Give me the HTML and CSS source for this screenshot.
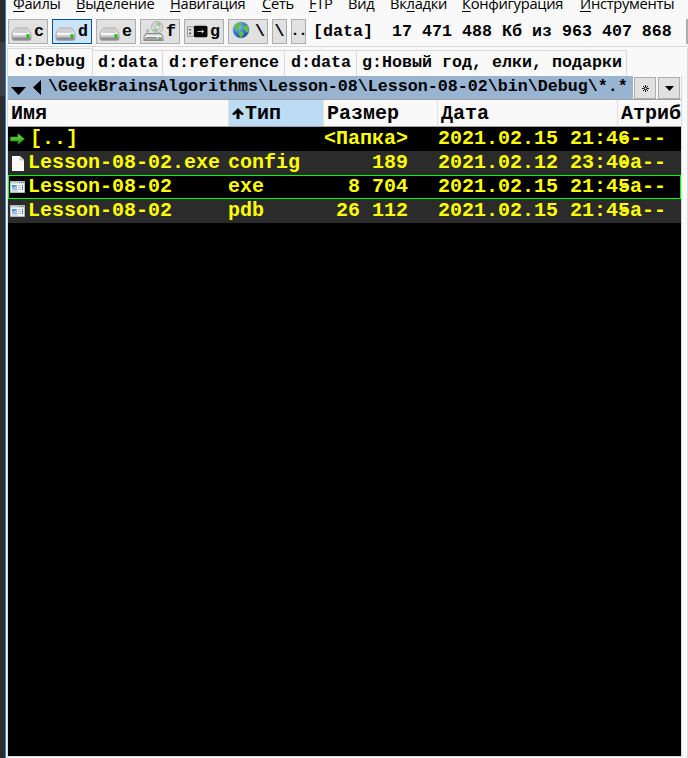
FILE: index.html
```
<!DOCTYPE html>
<html lang="ru">
<head>
<meta charset="utf-8">
<title>Файлы</title>
<link rel="stylesheet" href="styles.css">
</head>
<body>
<svg class="defs" width="0" height="0">
  <defs>
    <linearGradient id="metal" x1="0" y1="0" x2="0" y2="1"><stop offset="0" stop-color="#d8d8d8"/><stop offset=".45" stop-color="#f4f4f4"/><stop offset="1" stop-color="#858585"/></linearGradient>
    <radialGradient id="ocean" cx=".35" cy=".3" r=".75"><stop offset="0" stop-color="#8bc8f4"/><stop offset=".6" stop-color="#2e78c8"/><stop offset="1" stop-color="#123f94"/></radialGradient>
    <linearGradient id="leaf" x1="0" y1="0" x2="0" y2="1"><stop offset="0" stop-color="#8be85a"/><stop offset="1" stop-color="#118a0c"/></linearGradient>
    <symbol id="drive" viewBox="0 0 20 14">
      <path d="M5 1h10q1.500 0 2.200 1.500L19.500 7v4.500q0 1.800-1.800 1.800H2.300Q.5 13.300.5 11.500V7l2.300-4.500Q3.500 1 5 1z" fill="url(#metal)" stroke="#969696" stroke-width=".8"/>
      <path d="M5 1.500h10L17.500 6h-15z" fill="#cfcfcf"/><path d="M2 7h16" stroke="#fff"/><path d="M2 11.500h16" stroke="#8b8791" stroke-width="1.500"/>
      <path d="M15 7h3v4h-3z" fill="#35b72b"/>
    </symbol>
    <symbol id="app" viewBox="0 0 15 12">
      <path d="M.5.5h14v11H.5z" fill="#f5f5f5" stroke="#b9b9b9"/><path d="M1 1h13v1.500H1z" fill="#c4ccd5"/>
      <path d="M9 1h1v1H9zM11 1h1v1h-1zM13 1h1v1h-1z" fill="#56779b"/>
      <path d="M2 4h5v4.500H2z" fill="#448bd0"/><path d="M2 6.500l5-2v4H2z" fill="#8cc5ed"/>
      <path d="M8 4.500h3M8 6.500h3M8 8.500h3M2 10h6" stroke="#aab2ba" stroke-width=".8"/><path d="M12 4h1v5h-1z" fill="#4c8bc5"/>
    </symbol>
  </defs>
</svg>
<div class="window">
  <nav class="menu">
    <span class="m1"><u>Ф</u>айлы</span><span class="m2"><u>В</u>ыделение</span><span class="m3"><u>Н</u>авигация</span><span class="m4"><u>С</u>еть</span><span class="m5"><u>F</u>TP</span><span class="m6">Ви<u>д</u></span><span class="m7">Вк<u>л</u>адки</span><span class="m8"><u>К</u>онфигурация</span><span class="m9"><u>И</u>нструменты</span>
  </nav>
  <div class="toolbar">
    <button class="drive"><svg class="disk"><use href="#drive"/></svg>c</button>
    <button class="drive active"><svg class="disk"><use href="#drive"/></svg>d</button>
    <button class="drive"><svg class="disk"><use href="#drive"/></svg>e</button>
    <button class="drive"><svg class="optical" viewBox="0 0 20 20"><path d="M3 12h14l2 3v3.500H1V15z" fill="url(#metal)" stroke="#8b8b8b"/><path d="M3 16h10" stroke="#666"/><path d="M15 15.500h2.500v2H15z" fill="#35b72b"/><path d="M3 8h3v3H3z" fill="#b5b5b5"/><circle cx="13.500" cy="6" r="5.500" fill="#d2d4d2" stroke="#a4a4a4" stroke-width=".7"/><path d="M13.500 6V.7l4 2zM13.500 6v5l-4-2z" fill="#8ccb80"/><circle cx="13.500" cy="6" r="1.700" fill="#fff" stroke="#999" stroke-width=".6"/></svg>f</button>
    <button class="drive"><svg class="usb" viewBox="0 0 20 12"><path d="M.5 1.500h7v9h-7z" fill="#e5e5e5" stroke="#999"/><path d="M2 3.500h2v1.500H2zM2 7h2v1.500H2z" fill="#555"/><rect x="6.500" y=".5" width="13" height="11" rx="1.500" fill="#080808"/><path d="M10 6h6M14 4.500L15.800 6 14 7.500" fill="none" stroke="#ddd" stroke-width=".9"/></svg>g</button>
    <button class="drive"><svg class="globe" viewBox="0 0 18 18"><circle cx="9" cy="9" r="8" fill="url(#ocean)" stroke="#7c9cbd" stroke-width=".6"/><path d="M2 6q2-4 6-4.500l2 1-1 2-2 1 1 2-2 1-1 2zM12 4l4 1 .500 5-2 2-2-3-2-1zM7 10l4 1 1 2-3 4-2-3z" fill="#62bd49"/></svg>\</button>
    <button class="root">\</button><button class="up">..</button>
    <span class="volume">[data]</span><span class="space">17 471 488 Кб из 963 407 868</span><i class="next"></i>
  </div>
  <div class="workspace">
  <div class="panel">
    <div class="tabs"><span class="tab current">d:Debug</span><span class="tab t2">d:data</span><span class="tab t3">d:reference</span><span class="tab t4">d:data</span><span class="tab t5">g:Новый год, елки, подарки</span></div>
    <div class="path">
      <div class="address"><svg width="40" height="24"><path d="M3 11h15l-7.500 8zM33 4v15l-8-7.500z"/></svg><span>\GeekBrainsAlgorithms\Lesson-08\Lesson-08-02\bin\Debug\*.*</span></div>
      <button><svg width="7" height="7"><path d="M3.500 0v7M0 3.500h7M1 1l5 5M6 1L1 6" stroke="#000" stroke-width=".9"/><circle cx="3.500" cy="3.500" r="1" fill="#e1e1e1"/></svg></button><button><svg width="9" height="5"><path d="M0 0h9L4.500 5z"/></svg></button>
    </div>
    <div class="grid head"><span>Имя</span><span class="sorted"><svg width="12" height="12" viewBox="0 0 12 12"><path d="M6 0l6 6-2 1.200-2.500-2V11h-3V5.200L2 7.200 0 6z"/></svg>Тип</span><span>Размер</span><span>Дата</span><span>Атриб</span></div>
    <div class="list">
    <div class="grid row"><span class="name"><svg width="15" height="12" viewBox="0 0 15 12"><path d="M.5 4H8V.7L14.500 6 8 11.300V8H.5z" fill="url(#leaf)" stroke="#289b18" stroke-width=".6"/></svg><b class="parent">[..]</b></span><span></span><span class="size">&lt;Папка&gt;</span><span class="date">2021.02.15 21:46</span><span class="attr">----</span></div>
    <div class="grid row odd"><span class="name"><svg width="15" height="15" viewBox="0 0 15 15"><path d="M2 0h8l4 4v11H2z" fill="#f8f8f8"/><path d="M10 0v4h4z" fill="#ddd" stroke="#aaa" stroke-width=".6"/></svg><b>Lesson-08-02.exe</b></span><span>config</span><span class="size">189</span><span class="date">2021.02.12 23:40</span><span class="attr">-a--</span></div>
    <div class="grid row focused"><span class="name"><svg width="15" height="12"><use href="#app"/></svg><b>Lesson-08-02</b></span><span>exe</span><span class="size">8 704</span><span class="date">2021.02.15 21:45</span><span class="attr">-a--</span></div>
    <div class="grid row odd"><span class="name"><svg width="15" height="12"><use href="#app"/></svg><b>Lesson-08-02</b></span><span>pdb</span><span class="size">26 112</span><span class="date">2021.02.15 21:45</span><span class="attr">-a--</span></div>
    </div>
  </div>
  <div class="splitter"></div>
  </div>
</div>
</body>
</html>
```
FILE: styles.css
```
* { box-sizing: border-box; }
body { margin: 0; height: 758px; overflow: hidden; background: linear-gradient(#2d2d30 42px, #3f3f46 42px 96px, #2d2d30 96px); font: bold 16.67px/20px "Liberation Mono", monospace; color: #000; }
.defs { display: block; height: 0; }
svg { flex: none; }
button { font: inherit; color: inherit; padding: 0; margin: 0; border: 1px solid #adadad; background: #e1e1e1; display: flex; align-items: center; border-radius: 0; }
.window { height: 758px; margin-left: 5px; border-left: 1px solid #2b83cf; background: #f9f9f9; overflow: hidden; display: flex; flex-direction: column; }
.menu { height: 14px; flex: none; display: flex; padding-left: 7px; gap: 16px; font: 14.7px/20px "Open Sans", sans-serif; letter-spacing: -.28px; white-space: nowrap; }
.menu span { margin-top: -7px; height: 20px; flex: none; }
.menu u { text-underline-offset: 2px; text-decoration-thickness: 1px; }
.m1 { width: 47px; }
.m2 { width: 78px; }
.m3 { width: 76px; }
.m4 { width: 31px; }
.m5 { width: 23px; }
.m6 { width: 26px; }
.m7 { width: 56px; }
.m8 { width: 102px; }
.m9 { width: 94px; }

.toolbar { height: 33px; flex: none; display: flex; align-items: flex-start; padding: 5px 0 0 2px; border-bottom: 1px solid #d9d9d9; white-space: nowrap; }
.toolbar button { height: 25px; flex: none; }
.toolbar .drive { width: 40px; margin-right: 4px; padding-left: 2px; gap: 2px; }
.toolbar .active { border-color: #00549a; background: #cce4f7; }
.disk { width: 21px; height: 14px; margin-top: 5px; }
.optical { width: 21px; height: 21px; }
.usb { width: 21px; height: 13px; }
.globe { width: 18px; height: 18px; margin: 0 3px 3px 1px; }
.toolbar .root { width: 15px; justify-content: center; margin-right: 4px; }
.toolbar .up { width: 15px; overflow: hidden; letter-spacing: -1px; justify-content: center; font-size: 15px; }
.volume { margin: 3px 0 0 7px; }
.space { margin: 3px 0 0 19px; }
.next { width: 3px; height: 25px; margin-left: 14px; border: 1px solid #adadad; background: #e1e1e1; }

.workspace { flex: 1; display: flex; min-height: 0; justify-content: space-between; }
.panel { width: 675px; margin: 0 0 1px 1px; border: solid #d9d9d9; border-width: 0 1px 1px; display: flex; flex-direction: column; background: #f9f9f9; }
.splitter { width: 1px; background: #d9d9d9; margin-top: 1px; }
.tabs { display: flex; align-items: flex-end; height: 29px; flex: none; white-space: nowrap; background: #f9f9f9; margin: 0 -1px; }
.tab { height: 26px; border: 1px solid #d9d9d9; border-left: 0; border-bottom: 0; padding: 2px 0 0 5px; }
.tab.current { width: 86px; height: 28px; border-left: 1px solid #d9d9d9; padding: 3px 0 0 7px; }
.t2 { width: 70px; }
.t3 { width: 122px; padding-left: 6px; }
.t4 { width: 72px; padding-left: 6px; }
.t5 { width: 270px; }
.path { height: 24px; display: flex; flex: none; background: #f9f9f9; border-bottom: 1px solid #a0a0a0; }
.address { width: 625px; background: #99b4d1; display: flex; white-space: nowrap; }
.address span { padding-top: 1px; }
.path button { width: 22px; height: 22px; margin: 1px 1px 0; justify-content: center; }

.grid { display: grid; grid-template-columns: 220px 96px 114px 180px 63px; width: 673px; font-size: 20px; line-height: 24px; white-space: nowrap; }
.head { grid-template-columns: 221px 95px 114px 180px 63px; height: 27px; background: #f9f9f9; border-bottom: 1px solid #a0a0a0; flex: none; }
.head span { border-right: 1px solid #e1e1e1; padding: 2px 0 0 3px; }
.head span:last-child { border-right: 0; }
.head .sorted { background: #bcdcf4; display: flex; }
.sorted svg { margin: 6px 1px 0 0; }
.list { flex: 1; background: #000; color: #ff0; }
.row { height: 24px; }
.row.odd { background: #2b2b2b; }
.row.focused { outline: 1px solid #0f0; outline-offset: -1px; }
.name { display: flex; align-items: center; padding-left: 2px; }
.name b { margin-left: 3px; }
.name .parent { margin-left: 5px; }
.size { text-align: right; padding-right: 30px; margin-left: -10px; }
```
